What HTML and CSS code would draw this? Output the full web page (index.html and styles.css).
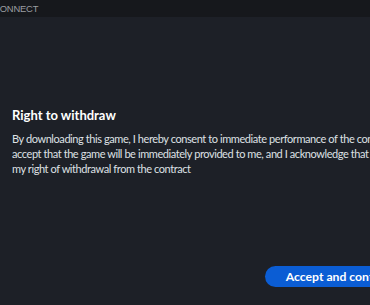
FILE: index.html
```html
<!DOCTYPE html>
<html>
<head>
<meta charset="utf-8">
<link rel="stylesheet" href="styles.css">
</head>
<body>
<div class="window">
  <div class="topbar"><span class="brand">CONNECT</span></div>
  <div class="content">
    <h1 class="title">Right to withdraw</h1>
    <p class="text">By downloading this game, I hereby consent to immediate performance of the contract and accept that the game will be immediately provided to me, and I acknowledge that I thereby lose my right of withdrawal from the contract</p>
    <div class="actions"><button class="btn">Accept and continue</button></div>
  </div>
</div>
</body>
</html>
```
FILE: styles.css
```css
html, body {
  margin: 0;
  padding: 0;
  width: 370px;
  height: 305px;
  overflow: hidden;
  background: #1d2027;
}
.window {
  width: 430px;
  height: 305px;
  display: flex;
  flex-direction: column;
  background: #1d2027;
}
.topbar {
  height: 17px;
  background: #16181c;
  display: flex;
  align-items: center;
  overflow: hidden;
}
.brand {
  font-family: "Liberation Sans", Arial, sans-serif;
  font-size: 9.4px;
  color: #9c9ea2;
  margin-left: -6.8px;
  letter-spacing: -0.2px;
}
.content {
  padding: 90px 12px 0 12px;
  display: flex;
  flex-direction: column;
}
.title {
  margin: 0;
  font-family: Lato, "Noto Sans", sans-serif;
  font-weight: 700;
  font-size: 13px;
  line-height: 16px;
  color: #ffffff;
}
.text {
  margin: 8px -24px 0 0;
  font-family: Lato, "Noto Sans", sans-serif;
  font-size: 11px;
  letter-spacing: -0.42px;
  line-height: 15px;
  color: #dfe1e5;
}
.actions {
  display: flex;
  justify-content: flex-end;
  margin-top: 90px;
}
.btn {
  font-family: Lato, "Noto Sans", sans-serif;
  font-weight: 700;
  font-size: 12.2px;
  color: #ffffff;
  background: #0b5dd4;
  border: none;
  border-radius: 11px;
  height: 21px;
  padding: 0 21px;
}
```
